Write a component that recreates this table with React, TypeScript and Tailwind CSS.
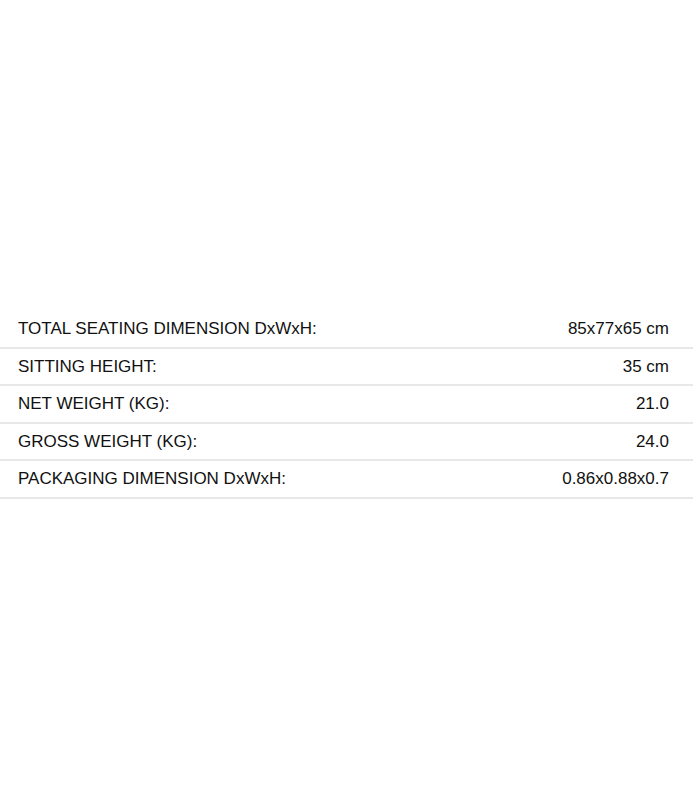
const rows: [string, string][] = [
  ["TOTAL SEATING DIMENSION DxWxH:", "85x77x65 cm"],
  ["SITTING HEIGHT:", "35 cm"],
  ["NET WEIGHT (KG):", "21.0"],
  ["GROSS WEIGHT (KG):", "24.0"],
  ["PACKAGING DIMENSION DxWxH:", "0.86x0.88x0.7"],
];

export default function App() {
  return (
    <div
      className="w-[700px] h-[800px] bg-white pt-[311px] text-[#111] text-[17px]"
      style={{ fontFamily: '"Liberation Sans", Arial, sans-serif' }}
    >
      <div className="w-[693px]">
        {rows.map(([label, value]) => (
          <div
            key={label}
            className="flex items-center justify-between h-[37.5px] border-b-2 border-[#e8e8e8] pl-[18px] pr-[24px]"
          >
            <span>{label}</span>
            <span>{value}</span>
          </div>
        ))}
      </div>
    </div>
  );
}
